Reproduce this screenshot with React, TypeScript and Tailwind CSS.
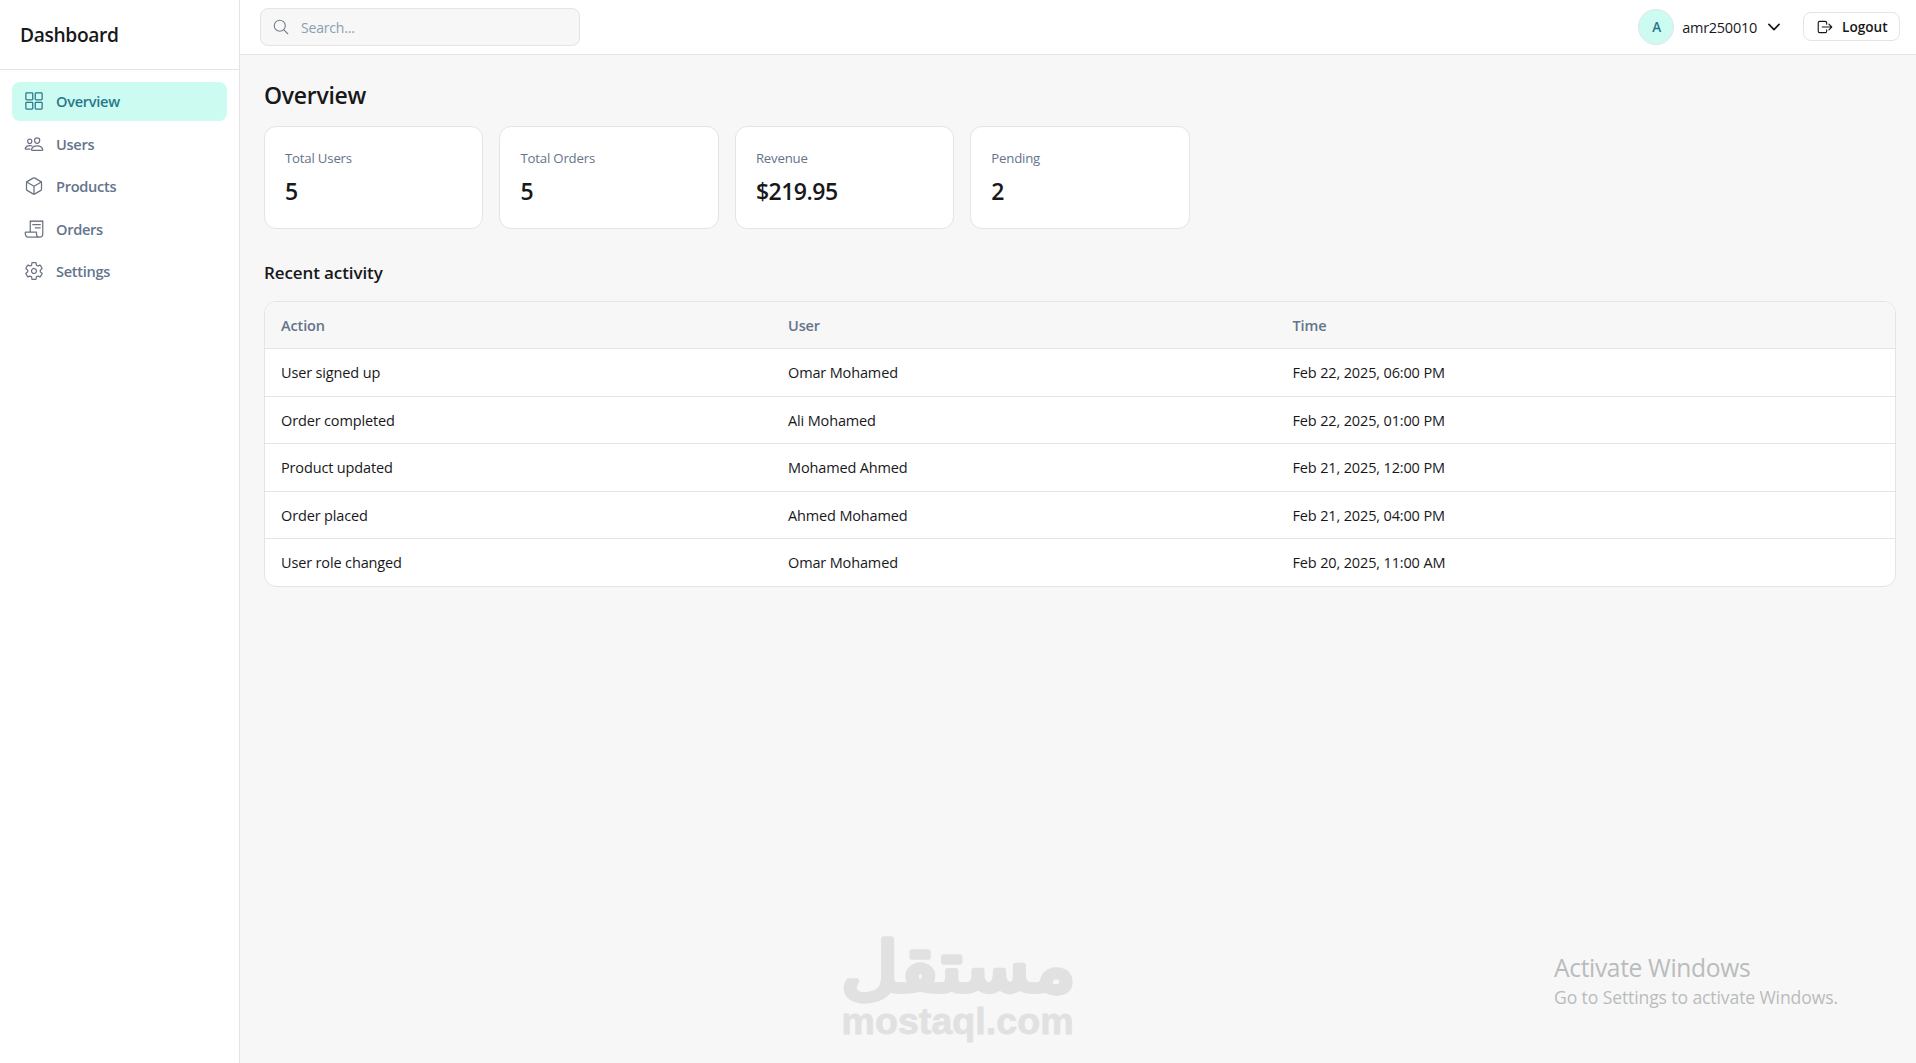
import type { IconType } from 'react-icons';
import {
  IoChevronDown,
  IoCubeOutline,
  IoGridOutline,
  IoLogOutOutline,
  IoPeopleOutline,
  IoReceiptOutline,
  IoSearchOutline,
  IoSettingsOutline,
} from 'react-icons/io5';

interface NavItem {
  label: string;
  icon: IconType;
  active?: boolean;
}

interface Activity {
  action: string;
  user: string;
  time: string;
}

const navItems: NavItem[] = [
  { label: 'Overview', icon: IoGridOutline, active: true },
  { label: 'Users', icon: IoPeopleOutline },
  { label: 'Products', icon: IoCubeOutline },
  { label: 'Orders', icon: IoReceiptOutline },
  { label: 'Settings', icon: IoSettingsOutline },
];

const stats = [
  { label: 'Total Users', value: '5' },
  { label: 'Total Orders', value: '5' },
  { label: 'Revenue', value: '$219.95' },
  { label: 'Pending', value: '2' },
];

const activities: Activity[] = [
  { action: 'User signed up', user: 'Omar Mohamed', time: 'Feb 22, 2025, 06:00 PM' },
  { action: 'Order completed', user: 'Ali Mohamed', time: 'Feb 22, 2025, 01:00 PM' },
  { action: 'Product updated', user: 'Mohamed Ahmed', time: 'Feb 21, 2025, 12:00 PM' },
  { action: 'Order placed', user: 'Ahmed Mohamed', time: 'Feb 21, 2025, 04:00 PM' },
  { action: 'User role changed', user: 'Omar Mohamed', time: 'Feb 20, 2025, 11:00 AM' },
];

const rowGrid = 'grid grid-cols-[507px_504.5px_1fr] items-center pt-px';

const Sidebar = () => (
  <aside className="w-60 shrink-0 border-r border-[#e4e4e7] bg-white">
    <div className="flex h-[70px] items-center border-b border-[#e4e4e7] px-5 pt-0.5">
      <h2 className="text-[19.2px] font-[550] tracking-[-0.018em]">Dashboard</h2>
    </div>
    <nav className="flex flex-col gap-1 p-3">
      {navItems.map(({ label, icon: Icon, active }) => (
        <a
          key={label}
          href="#"
          className={`flex h-[38.5px] items-center gap-3 rounded-lg px-3 text-[14.6px] leading-5 font-[550] tracking-[-0.02em] ${
            active ? 'bg-[#ccfbf1] text-[#28788a]' : 'text-[#64748b]'
          }`}
        >
          <Icon size={20} className={active ? 'text-[#28788a]' : 'text-[#6b7280]'} />
          {label}
        </a>
      ))}
    </nav>
  </aside>
);

const Topbar = () => (
  <header className="flex h-[55px] items-center justify-between border-b border-[#e4e4e7] bg-white pr-4 pl-5">
    <div className="flex h-[38px] w-80 items-center gap-[11px] rounded-lg border border-[#e4e4e7] bg-[#f7f7f7] px-[11px]">
      <IoSearchOutline size={18} className="shrink-0 text-[#78808c]" />
      <input
        type="text"
        placeholder="Search..."
        className="w-full bg-transparent text-[14px] tracking-[-0.013em] outline-none placeholder:text-[#8ba0b0]"
      />
    </div>

    <div className="-mt-px flex items-center gap-5">
      <button className="flex items-center gap-2">
        <span className="flex size-9 items-center justify-center rounded-full border border-[#e4e4e7] bg-[#ccfbf1] pt-px pl-px text-[13.5px] font-semibold text-[#28788a]">
          A
        </span>
        <span className="pt-0.5 text-[14.5px] tracking-[-0.018em]">amr250010</span>
        <IoChevronDown size={18} />
      </button>
      <button className="flex h-[29px] w-[97px] items-center gap-2 rounded-lg border border-[#e4e4e7] pl-3 text-[13.6px] font-[550]">
        <IoLogOutOutline size={18} className="shrink-0" />
        <span className="pt-px">Logout</span>
      </button>
    </div>
  </header>
);

const StatCard = ({ label, value }: { label: string; value: string }) => (
  <div className="h-[103px] rounded-xl border border-[#e4e4e7] bg-white p-5">
    <p className="mb-1.5 text-[13.2px] leading-[22px] tracking-[-0.014em] text-[#64748b]">{label}</p>
    <p className="text-[23px] leading-8 font-[550] tracking-[-0.022em]">{value}</p>
  </div>
);

const ActivityTable = () => (
  <div className="overflow-hidden rounded-xl border border-[#e4e4e7] bg-white text-[14.5px]">
    <div className={`${rowGrid} h-[47.2px] border-b border-[#e4e4e7] bg-[#f7f7f7] font-[550] tracking-[-0.008em] text-[#64748b]`}>
      <span className="px-4">Action</span>
      <span className="px-4">User</span>
      <span className="px-4">Time</span>
    </div>
    {activities.map((item) => (
      <div
        key={item.time}
        className={`${rowGrid} h-[47.5px] border-b border-[#e4e4e7] tracking-[-0.01em] last:h-[46.8px] last:border-b-0`}
      >
        <span className="px-4">{item.action}</span>
        <span className="px-4">{item.user}</span>
        <span className="px-4">{item.time}</span>
      </div>
    ))}
  </div>
);

// Brand mark: both lines are live text, rounded off by a thick round-joined stroke
const Watermark = () => (
  <svg
    viewBox="0 0 230 112"
    className="pointer-events-none absolute top-[933px] left-[843px] h-[112px] w-[230px] overflow-visible fill-[#e1e1e1] stroke-[#e1e1e1]"
    strokeLinejoin="round"
  >
    <text
      transform="translate(115.5 57.5) scale(1.005 0.88)"
      textAnchor="middle"
      direction="rtl"
      fontSize="78"
      strokeWidth="6"
      className="font-['DejaVu_Sans',sans-serif]"
    >
      مستقل
    </text>
    <text
      x="-1.5"
      y="100.5"
      fontSize="37.5"
      strokeWidth="0.8"
      textLength="232"
      className="font-bold font-['Liberation_Sans',sans-serif]"
    >
      mostaql.com
    </text>
  </svg>
);

export default function App() {
  return (
    <div className="relative flex h-screen overflow-hidden bg-[#f7f7f7] font-['Open_Sans',sans-serif] text-[#18181b]">
      <Sidebar />
      <div className="flex-1">
        <Topbar />
        <main className="pt-6 pr-5 pl-6">
          <h1 className="mb-[15px] text-[23px] leading-8 font-[550] tracking-[-0.0125em]">Overview</h1>
          <div className="grid grid-cols-[repeat(4,219.45px)] gap-4">
            {stats.map((stat) => (
              <StatCard key={stat.label} {...stat} />
            ))}
          </div>
          <h2 className="mt-8 mb-4 text-[17px] leading-6 font-[550] tracking-[-0.006em]">Recent activity</h2>
          <ActivityTable />
        </main>
      </div>

      <Watermark />

      {/* System notice */}
      <div className="pointer-events-none absolute top-[952px] left-[1554px] text-[#b9bcbc]">
        <p className="text-[24.6px] leading-8 tracking-[-0.014em]">Activate Windows</p>
        <p className="text-[17.6px] leading-[26px] tracking-[-0.007em]">Go to Settings to activate Windows.</p>
      </div>
    </div>
  );
}
